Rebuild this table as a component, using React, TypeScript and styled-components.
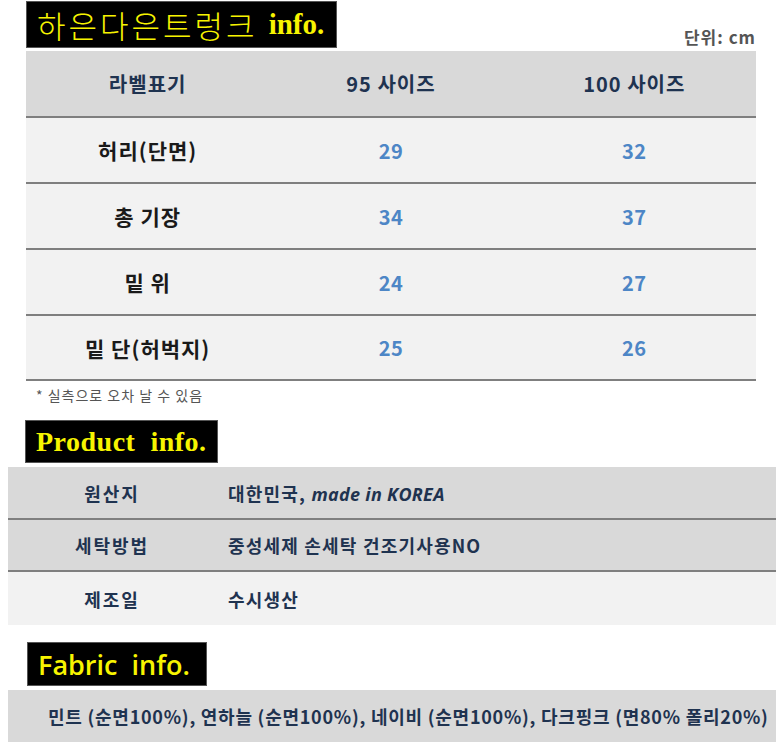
import React from "react";
import styled, { createGlobalStyle } from "styled-components";

const Global = createGlobalStyle`
  html, body { margin: 0; padding: 0; background: #ffffff; }
  body { font-family: "Noto Sans CJK KR", "Noto Sans", sans-serif; }
`;

const Page = styled.div`
  width: 776px;
  display: flex;
  flex-direction: column;
`;

const SizeSection = styled.section`
  padding: 1px 20px 0 26px;
  display: flex;
  flex-direction: column;
`;

const TopBar = styled.div`
  display: flex;
  align-items: flex-end;
  justify-content: space-between;
  height: 47px;
  margin-bottom: 3px;
`;

const Badge = styled.div<{ $w: number; $h: number }>`
  width: ${(p) => p.$w}px;
  height: ${(p) => p.$h}px;
  box-sizing: border-box;
  background: #000;
  border: 1px solid #555;
  color: #f7f400;
  display: flex;
  align-items: center;
  padding-left: 10px;
  white-space: pre;
  overflow: hidden;
`;

const TitleKo = styled.span`
  font-family: "Noto Sans CJK KR", sans-serif;
  font-weight: 300;
  font-size: 31px;
  letter-spacing: 3px;
`;

const TitleEn = styled.span`
  font-family: "Liberation Serif", serif;
  font-weight: 700;
  font-size: 29px;
  margin-left: 11px;
`;

const Unit = styled.div`
  font-family: "Noto Sans CJK KR", sans-serif;
  font-weight: 700;
  font-size: 17px;
  letter-spacing: 1px;
  color: #555;
  margin-bottom: -1px;
`;

const SizeTable = styled.div`
  display: grid;
  grid-template-columns: 1fr 1fr 1fr;
  width: 730px;
`;

const SizeRow = styled.div<{ $head?: boolean; $h: number }>`
  display: contents;
  & > div {
    height: ${(p) => p.$h}px;
    background: ${(p) => (p.$head ? "#d9d9d9" : "#f2f2f2")};
    border-bottom: 2px solid #7f7f7f;
  }
`;

const Cell = styled.div<{ $kind: "head" | "label" | "num" }>`
  display: flex;
  align-items: center;
  justify-content: center;
  font-family: "Noto Sans CJK KR", sans-serif;
  font-weight: 700;
  font-size: ${(p) => (p.$kind === "label" ? 21 : 20)}px;
  letter-spacing: ${(p) => (p.$kind === "num" ? 0.5 : 1)}px;
  color: ${(p) =>
    p.$kind === "head" ? "#1f3350" : p.$kind === "label" ? "#1a1a1a" : "#4d86c6"};
`;

const Note = styled.div`
  font-family: "Noto Sans CJK KR", sans-serif;
  font-size: 14px;
  letter-spacing: 1px;
  color: #555;
  padding: 4px 0 0 10px;
  height: 24px;
`;

const InfoSection = styled.section<{ $top: number }>`
  padding-top: ${(p) => p.$top}px;
  display: flex;
  flex-direction: column;
`;

const BadgeWrap = styled.div<{ $left: number }>`
  padding-left: ${(p) => p.$left}px;
  margin-bottom: 4px;
`;

const ProductTitle = styled.span`
  font-family: "Liberation Serif", serif;
  font-weight: 700;
  font-size: 28px;
  letter-spacing: 0.5px;
`;

const FabricTitle = styled.span`
  font-family: "Open Sans", sans-serif;
  font-weight: 600;
  font-size: 27px;
`;

const InfoTable = styled.div`
  margin-left: 8px;
  display: flex;
  flex-direction: column;
`;

const InfoRow = styled.div<{ $light?: boolean; $line?: boolean; $h: number }>`
  display: grid;
  grid-template-columns: 208px 1fr;
  align-items: center;
  height: ${(p) => p.$h}px;
  background: ${(p) => (p.$light ? "#f2f2f2" : "#d9d9d9")};
  border-bottom: ${(p) => (p.$line ? "2px solid #7f7f7f" : "none")};
  font-family: "Noto Sans CJK KR", sans-serif;
  font-weight: 700;
  font-size: 18px;
  letter-spacing: 1.2px;
  color: #1f3350;
`;

const InfoLabel = styled.div`
  text-align: center;
  letter-spacing: 2px;
`;

const InfoValue = styled.div`
  padding-left: 12px;
  white-space: nowrap;
`;

const Italic = styled.span`
  font-family: "Open Sans", sans-serif;
  font-style: italic;
  font-weight: 700;
  letter-spacing: 0.3px;
`;

const FabricRow = styled.div`
  margin-left: 8px;
  height: 52px;
  background: #d9d9d9;
  display: flex;
  align-items: center;
  padding-left: 40px;
  font-family: "Noto Sans CJK KR", sans-serif;
  font-weight: 700;
  font-size: 18px;
  letter-spacing: 0.75px;
  color: #1f3350;
  white-space: nowrap;
`;

const sizes = [
  ["허리(단면)", "29", "32"],
  ["총 기장", "34", "37"],
  ["밑 위", "24", "27"],
  ["밑 단(허벅지)", "25", "26"],
];

export default function App() {
  return (
    <Page>
      <Global />
      <SizeSection>
        <TopBar>
          <Badge $w={311} $h={47}>
            <TitleKo>하은다은트렁크</TitleKo>
            <TitleEn>info.</TitleEn>
          </Badge>
          <Unit>단위: cm</Unit>
        </TopBar>
        <SizeTable>
          <SizeRow $head $h={65}>
            <Cell $kind="head">라벨표기</Cell>
            <Cell $kind="head">95 사이즈</Cell>
            <Cell $kind="head">100 사이즈</Cell>
          </SizeRow>
          {sizes.map((r, i) => (
            <SizeRow key={r[0]} $h={i === 3 ? 63 : 64}>
              <Cell $kind="label">{r[0]}</Cell>
              <Cell $kind="num">{r[1]}</Cell>
              <Cell $kind="num">{r[2]}</Cell>
            </SizeRow>
          ))}
        </SizeTable>
        <Note>* 실측으로 오차 날 수 있음</Note>
      </SizeSection>

      <InfoSection $top={11}>
        <BadgeWrap $left={25}>
          <Badge $w={193} $h={43}>
            <ProductTitle>Product  info.</ProductTitle>
          </Badge>
        </BadgeWrap>
        <InfoTable>
          <InfoRow $h={51} $line>
            <InfoLabel>원산지</InfoLabel>
            <InfoValue>
              대한민국, <Italic>made in KOREA</Italic>
            </InfoValue>
          </InfoRow>
          <InfoRow $h={50} $line>
            <InfoLabel>세탁방법</InfoLabel>
            <InfoValue>중성세제 손세탁 건조기사용NO</InfoValue>
          </InfoRow>
          <InfoRow $h={53} $light>
            <InfoLabel>제조일</InfoLabel>
            <InfoValue>수시생산</InfoValue>
          </InfoRow>
        </InfoTable>
      </InfoSection>

      <InfoSection $top={17}>
        <BadgeWrap $left={27}>
          <Badge $w={180} $h={44}>
            <FabricTitle>Fabric  info.</FabricTitle>
          </Badge>
        </BadgeWrap>
        <FabricRow>
          민트 (순면100%), 연하늘 (순면100%), 네이비 (순면100%), 다크핑크 (면80% 폴리20%)
        </FabricRow>
      </InfoSection>
    </Page>
  );
}
